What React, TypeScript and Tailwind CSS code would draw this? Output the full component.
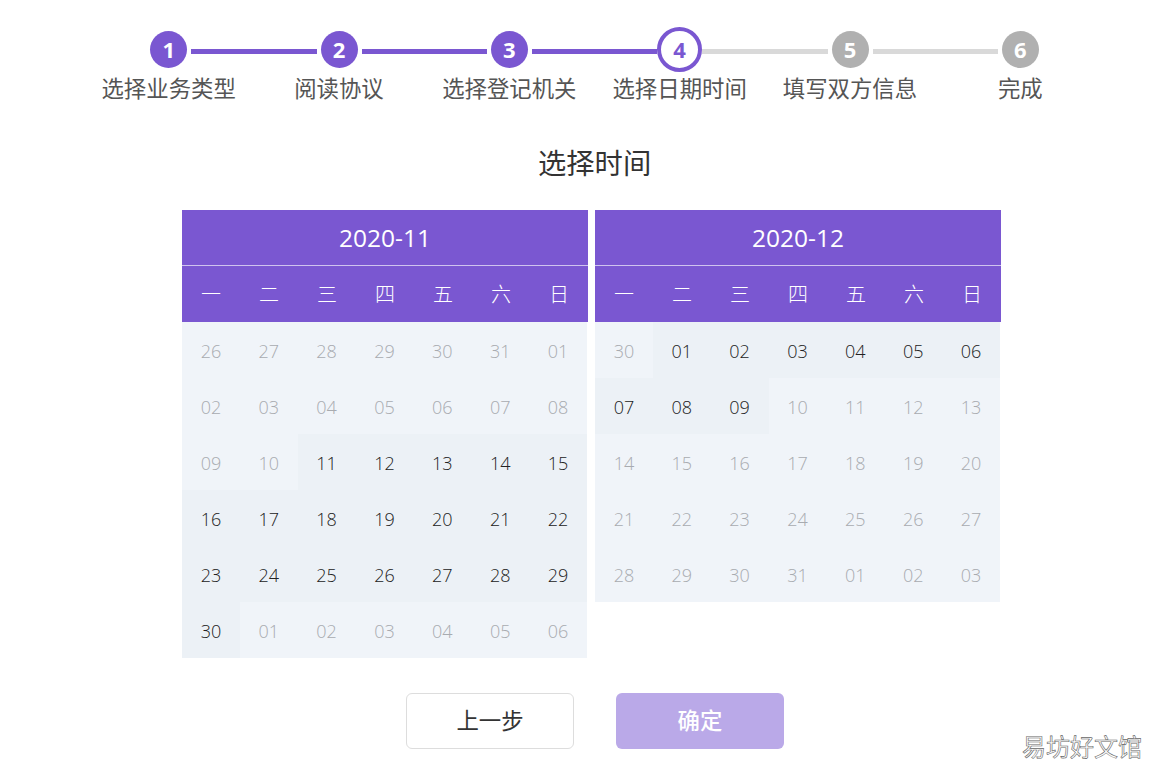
import React from 'react';

const font = { cjk: "font-['Open_Sans','Noto_Sans_CJK_SC',sans-serif]" };

const steps = ['选择业务类型', '阅读协议', '选择登记机关', '选择日期时间', '填写双方信息', '完成'];
const weekDays = ['一', '二', '三', '四', '五', '六', '日'];

type Day = { label: string; on: boolean };

function buildDays(labels: string[], firstOn: number, lastOn: number): Day[] {
  return labels.map((label, i) => ({ label, on: i >= firstOn && i <= lastOn }));
}

const novLabels = [
  '26', '27', '28', '29', '30', '31', '01',
  '02', '03', '04', '05', '06', '07', '08',
  '09', '10', '11', '12', '13', '14', '15',
  '16', '17', '18', '19', '20', '21', '22',
  '23', '24', '25', '26', '27', '28', '29',
  '30', '01', '02', '03', '04', '05', '06',
];

const decLabels = [
  '30', '01', '02', '03', '04', '05', '06',
  '07', '08', '09', '10', '11', '12', '13',
  '14', '15', '16', '17', '18', '19', '20',
  '21', '22', '23', '24', '25', '26', '27',
  '28', '29', '30', '31', '01', '02', '03',
];

function Step({ index, label }: { index: number; label: string }) {
  const current = index === 3;
  const done = index < 3;
  return (
    <div className="flex flex-col items-center">
      <div className="flex h-[45px] w-full items-center">
        <div className={`mt-[4px] h-[5px] flex-1 ${index === 0 ? 'invisible' : index <= 3 ? 'bg-[#7a57d1]' : 'bg-[#d9d9d9]'}`} />
        {current ? (
          <div className="flex h-[45px] w-[45px] items-center justify-center rounded-full border-[4px] border-[#7a57d1] bg-white pb-[1px] text-[22px] font-bold text-[#7a57d1]">
            {index + 1}
          </div>
        ) : (
          <div className={`mx-[4px] flex h-[37px] w-[37px] items-center justify-center rounded-full pb-[1px] text-[22px] font-bold text-white ${done ? 'bg-[#7a57d1]' : 'bg-[#b0b0b0]'}`}>
            {index + 1}
          </div>
        )}
        <div className={`mt-[4px] h-[5px] flex-1 ${index === 5 ? 'invisible' : index < 3 ? 'bg-[#7a57d1]' : 'bg-[#d9d9d9]'}`} />
      </div>
      <div className="mt-[1px] whitespace-nowrap text-[22.4px] leading-[32px] text-[#555555]">{label}</div>
    </div>
  );
}

function Calendar({ title, days }: { title: string; days: Day[] }) {
  return (
    <div className="w-[406px]">
      <div className="bg-[#7a57d1] text-white">
        <div className="flex h-[56px] items-center justify-center border-b border-[#cfc3ee] pt-[1px] text-[24.5px]">{title}</div>
        <div className="grid h-[56px] grid-cols-7 items-center pt-[2px] text-center text-[20px] font-light">
          {weekDays.map((d) => (
            <div key={d}>{d}</div>
          ))}
        </div>
      </div>
      <div className="grid w-[405px] grid-cols-7">
        {days.map((d, i) => (
          <div
            key={i}
            className={`flex h-[56px] items-center justify-center pt-[2px] text-[18px] font-light ${d.on ? 'bg-[#ecf1f6] text-[#222222]' : 'bg-[#f0f4f9] text-[#a8abb0]'}`}
          >
            {d.label}
          </div>
        ))}
      </div>
    </div>
  );
}

export default function App() {
  return (
    <div className={`relative h-[779px] w-[1169px] overflow-hidden bg-white ${font.cjk}`}>
      {/* 步骤条 */}
      <div className="ml-[83.5px] grid w-[1022px] grid-cols-6 pt-[27px]">
        {steps.map((s, i) => (
          <Step key={s} index={i} label={s} />
        ))}
      </div>

      <h2 className="mt-[38px] ml-[538px] h-[66px] text-[28.3px] leading-[40px] font-normal text-[#333333]">选择时间</h2>

      {/* 日历 */}
      <div className="mt-[1px] ml-[182px] flex items-start gap-[7px]">
        <Calendar title="2020-11" days={buildDays(novLabels, 16, 35)} />
        <Calendar title="2020-12" days={buildDays(decLabels, 1, 9)} />
      </div>

      {/* 按钮 */}
      <div className="mt-[35px] ml-[406px] flex gap-[42px]">
        <button className="h-[56px] w-[168px] rounded-[6px] border border-[#dddddd] bg-white text-[22.4px] text-[#333333]">上一步</button>
        <button className="h-[56px] w-[168px] rounded-[6px] bg-[#baa9e8] text-[22.4px] font-medium text-white">确定</button>
      </div>

      {/* 水印 */}
      <div className="absolute top-[731px] left-[1022px] text-[24px] leading-[32px] text-white [-webkit-text-stroke:0.6px_#666666]">易坊好文馆</div>
    </div>
  );
}
